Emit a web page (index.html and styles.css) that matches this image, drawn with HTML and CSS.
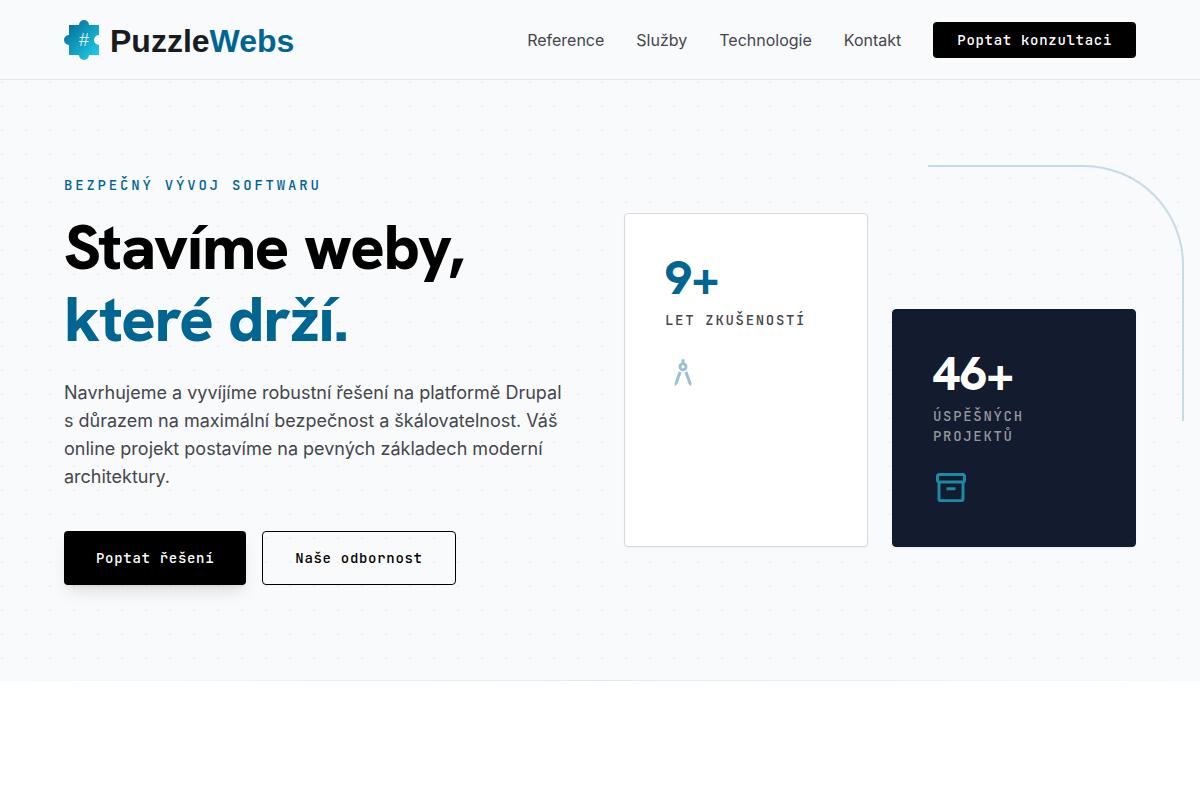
FILE: index.html
```html
<!DOCTYPE html>
<html lang="cs">
<head>
<meta charset="utf-8">
<meta name="viewport" content="width=device-width, initial-scale=1">
<title>PuzzleWebs</title>
<link rel="stylesheet" href="styles.css">
</head>
<body>
<header class="header">
  <a class="logo" href="#">
    <svg class="logo-mark" viewBox="0 0 36 40" width="36" height="40" aria-hidden="true">
      <defs>
        <linearGradient id="piece" x1="0" y1="0" x2="1" y2="1">
          <stop offset="0" stop-color="#006591"/>
          <stop offset="1" stop-color="#22d3ee"/>
        </linearGradient>
      </defs>
      <path fill="url(#piece)" d="M5 5H15A5 5 0 1 1 25 5H35V15A5 5 0 0 0 35 25V35H25A5 5 0 0 1 15 35H5V25A5 5 0 0 1 5 15Z"/>
      <text class="logo-hash" x="20" y="26" text-anchor="middle">#</text>
    </svg>
    <span class="logo-name">Puzzle<span class="accent">Webs</span></span>
  </a>
  <nav class="nav">
    <a class="nav-link" href="#reference">Reference</a>
    <a class="nav-link" href="#sluzby">Služby</a>
    <a class="nav-link" href="#technologie">Technologie</a>
    <a class="nav-link" href="#kontakt">Kontakt</a>
    <button class="button button-small" type="button">Poptat konzultaci</button>
  </nav>
</header>
<main>
  <section class="hero">
    <div class="intro">
      <p class="eyebrow">Bezpečný vývoj softwaru</p>
      <h1 class="title">Stavíme weby,<br><span class="accent">které drží.</span></h1>
      <p class="lead">Navrhujeme a vyvíjíme robustní řešení na platformě Drupal s důrazem na maximální bezpečnost a škálovatelnost. Váš online projekt postavíme na pevných základech moderní architektury.</p>
      <div class="actions">
        <button class="button button-primary" type="button">Poptat řešení</button>
        <button class="button button-outline" type="button">Naše odbornost</button>
      </div>
    </div>
    <div class="stats">
      <article class="card">
        <p class="number accent">9+</p>
        <p class="label">Let zkušeností</p>
        <svg class="icon icon-compass" viewBox="0 -0.5 24 24" aria-hidden="true"><path d="M6.36 18.78 6.61 21l1.62-1.54 2.77-7.6c-.68-.17-1.28-.51-1.77-.98L6.36 18.78zM14.77 10.88c-.49.47-1.1.81-1.77.98l2.77 7.6L17.39 21l.26-2.22-2.88-7.9zM15 8c0-1.3-.84-2.4-2-2.82V3h-2v2.18C9.84 5.6 9 6.7 9 8c0 1.66 1.34 3 3 3s3-1.34 3-3zm-3 1c-.55 0-1-.45-1-1s.45-1 1-1 1 .45 1 1-.45 1-1 1z"/></svg>
      </article>
      <article class="card card-dark">
        <p class="number">46+</p>
        <p class="label">Úspěšných projektů</p>
        <svg class="icon icon-box" viewBox="0 0 24 24" aria-hidden="true"><path d="M20 2H4c-1 0-2 .9-2 2v3.01c0 .72.43 1.34 1 1.69V19.5c0 1.1 1 1.9 2 1.9h14c1 0 2-.8 2-1.9V8.7c.57-.35 1-.97 1-1.69V4c0-1.1-1-2-2-2zm-1 17.5H5V9h14v10.5zM20 7H4V4h16v3zM9 11.5h6v2H9z"/></svg>
      </article>
    </div>
  </section>
</main>
</body>
</html>
```

FILE: styles.css
```css
*,
*::before,
*::after {
  box-sizing: border-box;
}

body {
  margin: 0;
  background: #fff;
  color: #45464d;
  font-family: Inter, "Noto Sans", sans-serif;
}

h1,
p {
  margin: 0;
}

.accent {
  color: #006591;
}

.header {
  display: flex;
  align-items: center;
  justify-content: space-between;
  min-height: 80px;
  padding: 0 64px;
  background: #f8fafc;
  border-bottom: 1px solid #e2e8f0;
}

.logo {
  display: flex;
  align-items: center;
  gap: 10px;
  color: #191c1e;
  text-decoration: none;
}

.logo-mark {
  display: block;
}

.logo-hash {
  fill: #fff;
  fill-opacity: 0.85;
  font: 18px "Liberation Sans", sans-serif;
}

.logo-name {
  padding-top: 2px;
  font: bold 32px/40px "Liberation Sans", Arial, sans-serif;
}

.nav {
  display: flex;
  align-items: center;
  gap: 32px;
}

.nav-link {
  color: #45464d;
  font-size: 16px;
  line-height: 24px;
  text-decoration: none;
}

.button {
  border: 0;
  border-radius: 4px;
  background: #000;
  color: #fff;
  font: 500 14px/20px "JetBrains Mono", "DejaVu Sans Mono", monospace;
  letter-spacing: 0.05em;
  white-space: nowrap;
  cursor: pointer;
}

.button-small {
  padding: 8px 24px;
}

.button-primary {
  padding: 16px 32px;
  box-shadow: 0 10px 15px -3px rgb(0 0 0 / 10%), 0 4px 6px -4px rgb(0 0 0 / 10%);
}

.button-outline {
  padding: 16px 32px;
  border: 1px solid #000;
  background: transparent;
  color: #000;
}

.hero {
  position: relative;
  display: grid;
  grid-template-columns: 1fr 1fr;
  align-items: center;
  gap: 48px;
  min-height: 601px;
  padding: 64px 64px 65px;
  background-color: #f8fafc;
  background-image: radial-gradient(circle at 2px 2px, #eeeff1 1px, transparent 1px);
  background-size: 24px 24px;
}

.hero::after {
  content: "";
  position: absolute;
  inset: auto 0 0;
  height: 1px;
  background: linear-gradient(90deg, transparent, #e2e8f0, transparent);
}

.eyebrow {
  margin-bottom: 16px;
  color: #006591;
  font: 500 14px/20px "JetBrains Mono", "DejaVu Sans Mono", monospace;
  letter-spacing: 0.2em;
  text-transform: uppercase;
}

.title {
  margin-bottom: 24px;
  color: #000;
  font-family: "Hanken Grotesk", Inter, sans-serif;
  font-size: 64px;
  font-weight: 800;
  line-height: 72px;
  letter-spacing: -0.02em;
}

.lead {
  margin-bottom: 40px;
  font-size: 18px;
  line-height: 28px;
}

.actions {
  display: flex;
  gap: 16px;
}

.stats {
  position: relative;
  display: grid;
  grid-template-columns: 1fr 1fr;
  gap: 24px;
}

.stats::before {
  content: "";
  position: absolute;
  top: -48px;
  right: -48px;
  width: 256px;
  height: 256px;
  border-top: 2px solid #006591;
  border-right: 2px solid #006591;
  border-top-right-radius: 100px;
  opacity: 0.2;
}

.card {
  position: relative;
  padding: 40px;
  border: 1px solid #d8dadf;
  border-radius: 4px;
  background: #fff;
  box-shadow: 0 1px 2px rgb(0 0 0 / 5%);
}

.card-dark {
  margin-top: 96px;
  border-color: #131b2e;
  background: #131b2e;
  color: #fff;
}

.number {
  margin-bottom: 8px;
  font-family: "Hanken Grotesk", Inter, sans-serif;
  font-size: 48px;
  font-weight: 800;
  line-height: 48px;
}

.label {
  margin-bottom: 24px;
  font: 500 14px/20px "JetBrains Mono", "DejaVu Sans Mono", monospace;
  letter-spacing: 0.12em;
  text-transform: uppercase;
}

.card-dark .label {
  color: #94969d;
}

.icon {
  display: block;
  width: 36px;
  height: 36px;
}

.icon-compass {
  fill: #99c1d3;
}

.icon-box {
  fill: #1b8aa5;
}
```
